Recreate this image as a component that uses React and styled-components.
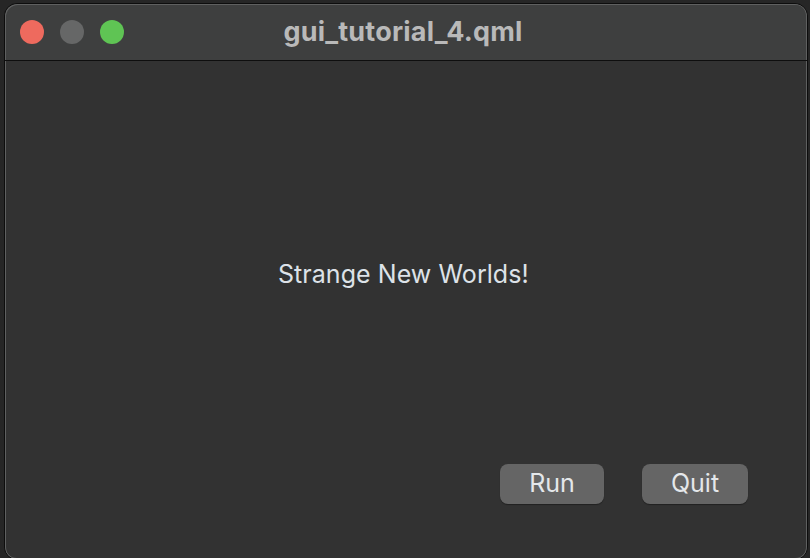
import React from "react";
import styled, { createGlobalStyle } from "styled-components";

const Global = createGlobalStyle`
  html, body { margin: 0; padding: 0; background: #262626; }
  body { width: 810px; height: 558px; overflow: hidden; font-family: Inter, "Noto Sans", "Liberation Sans", sans-serif; }
`;

const Desk = styled.div`
  width: 810px;
  height: 558px;
  padding: 3px 2px 0 4px;
  box-sizing: border-box;
`;

const Window = styled.div`
  height: 555px;
  border: 1px solid #0d0d0d;
  border-radius: 13px;
  overflow: hidden;
  display: flex;
  flex-direction: column;
  background: #323232;
`;

const TitleBar = styled.div`
  height: 56px;
  flex: none;
  background: #3e3f3f;
  border-bottom: 1px solid #0e0e0e;
  box-shadow: inset 1px 1px 0 #5f6060, inset -1px 0 0 #5f6060;
  border-radius: 12px 12px 0 0;
  display: grid;
  grid-template-columns: 1fr auto 1fr;
  align-items: center;
  padding: 0 14px 0 15px;
`;

const Lights = styled.div`
  display: flex;
  gap: 16px;
`;

const Light = styled.span`
  width: 24px;
  height: 24px;
  border-radius: 50%;
  background: ${(p) => p.$c};
`;

const Title = styled.div`
  font-family: Inter, "Noto Sans", sans-serif;
  font-weight: 700;
  font-size: 27px;
  letter-spacing: 0.2px;
  color: #b9b9b9;
  margin-top: -1px;
  margin-left: -7px;
`;

const Body = styled.div`
  flex: 1;
  background: #323232;
  border-radius: 0 0 12px 12px;
  box-shadow: inset 1px 0 0 #5f6060, inset -1px 0 0 #5f6060, inset 0 -1px 0 #5f6060;
  display: flex;
  flex-direction: column;
`;

const Message = styled.div`
  margin-top: 197px;
  padding-left: 273px;
  font-size: 25px;
  letter-spacing: 0.05px;
  color: #dde2e8;
  line-height: 32px;
`;

const Buttons = styled.div`
  margin-top: 174px;
  padding-left: 495px;
  display: flex;
  gap: 38px;
`;

const Button = styled.button`
  width: ${(p) => p.$w}px;
  height: 40px;
  border: none;
  border-radius: 8px;
  background: #656565;
  color: #e4e7ea;
  font-family: Inter, "Noto Sans", sans-serif;
  font-size: 25px;
  padding: 0;
  padding-bottom: 2px;
  box-shadow: 0 1px 1px rgba(0,0,0,0.35);
`;

export default function App() {
  return (
    <>
      <Global />
      <Desk>
        <Window>
          <TitleBar>
            <Lights>
              <Light $c="#ee6a5e" />
              <Light $c="#666767" />
              <Light $c="#5fc454" />
            </Lights>
            <Title>gui_tutorial_4.qml</Title>
            <div />
          </TitleBar>
          <Body>
            <Message>Strange New Worlds!</Message>
            <Buttons>
              <Button $w={104}>Run</Button>
              <Button $w={106}>Quit</Button>
            </Buttons>
          </Body>
        </Window>
      </Desk>
    </>
  );
}
